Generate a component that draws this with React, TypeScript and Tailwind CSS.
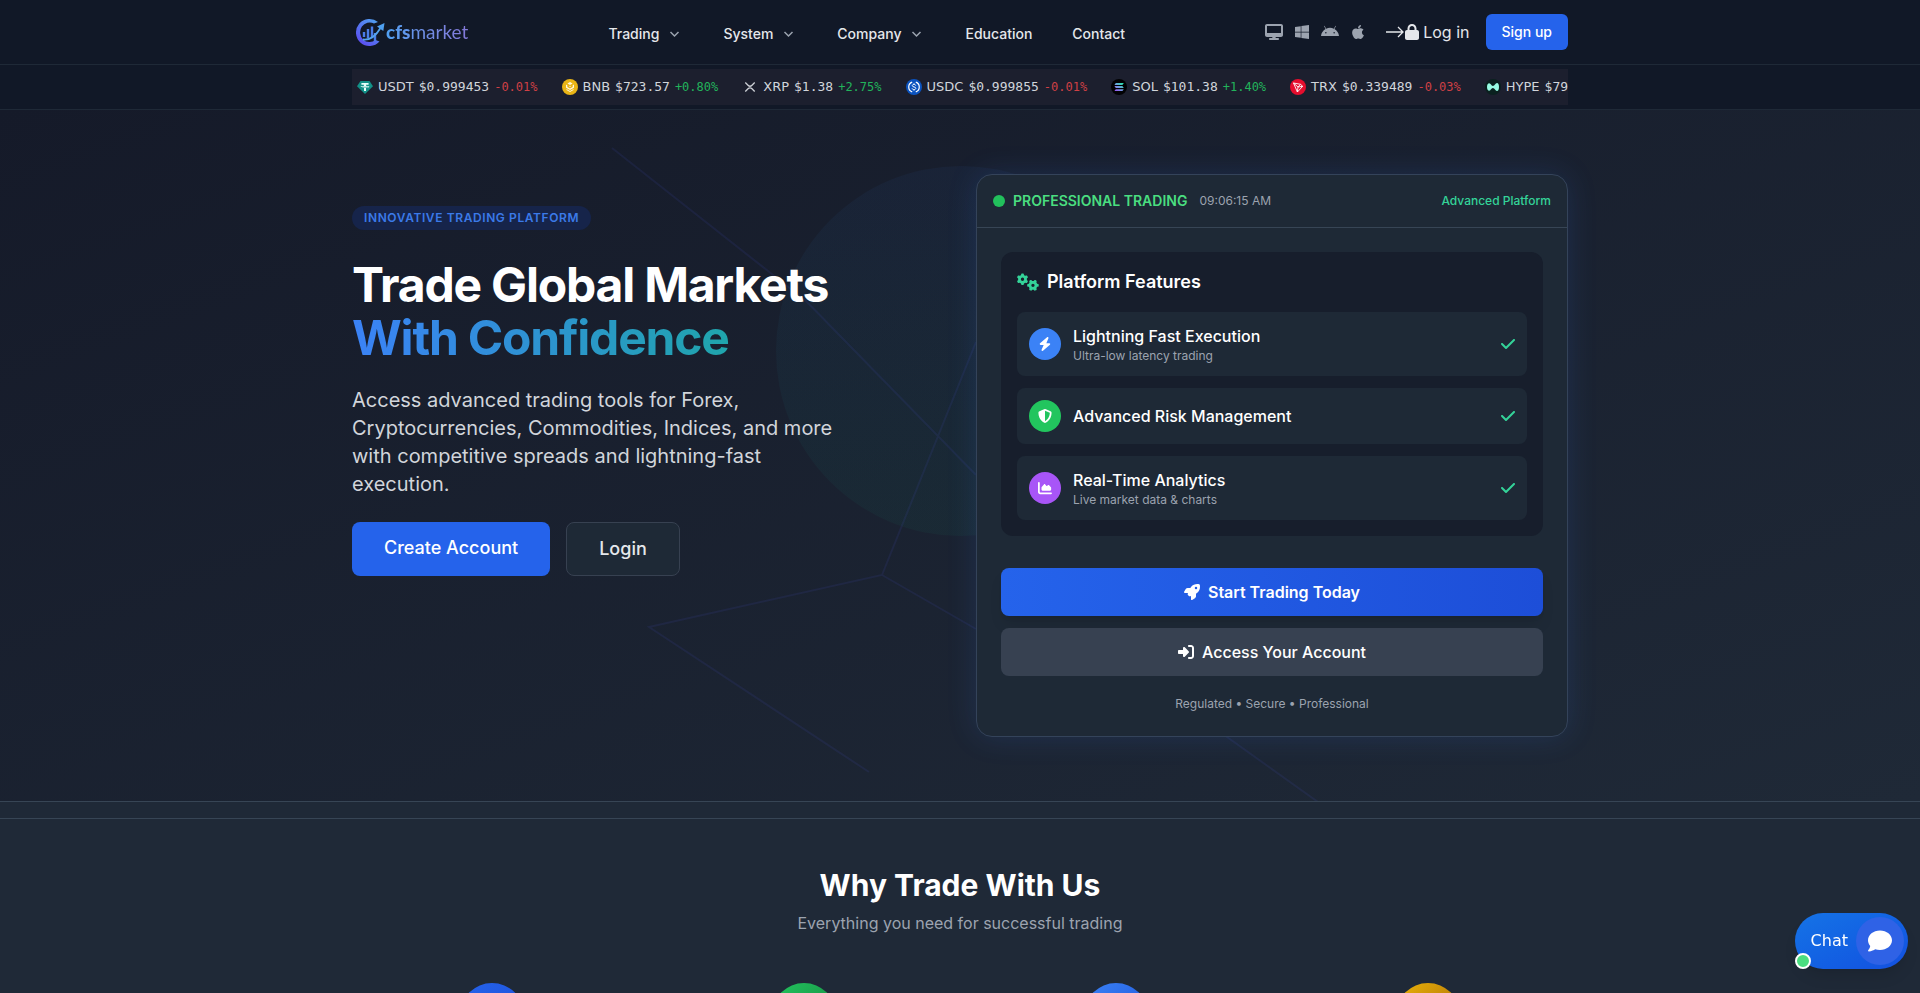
import {
  FaAndroid,
  FaApple,
  FaBolt,
  FaChartArea,
  FaCheck,
  FaComment,
  FaDesktop,
  FaGears,
  FaLock,
  FaRightToBracket,
  FaRocket,
  FaShieldHalved,
  FaWindows,
} from 'react-icons/fa6';

const nav = [
  { label: 'Trading', menu: true },
  { label: 'System', menu: true },
  { label: 'Company', menu: true },
  { label: 'Education', menu: false },
  { label: 'Contact', menu: false },
];

const coins = [
  { symbol: 'USDT', price: '$0.999453', change: '-0.01%' },
  { symbol: 'BNB', price: '$723.57', change: '+0.80%' },
  { symbol: 'XRP', price: '$1.38', change: '+2.75%' },
  { symbol: 'USDC', price: '$0.999855', change: '-0.01%' },
  { symbol: 'SOL', price: '$101.38', change: '+1.40%' },
  { symbol: 'TRX', price: '$0.339489', change: '-0.03%' },
  { symbol: 'HYPE', price: '$79', change: '' },
];

const features = [
  { title: 'Lightning Fast Execution', text: 'Ultra-low latency trading', icon: FaBolt, color: 'bg-[#3b82f6]' },
  { title: 'Advanced Risk Management', text: '', icon: FaShieldHalved, color: 'bg-[#22c55e]' },
  { title: 'Real-Time Analytics', text: 'Live market data & charts', icon: FaChartArea, color: 'bg-[#a855f7]' },
];

const reasons = [
  'from-[#2563eb] to-[#1d4ed8]',
  'from-[#22c55e] to-[#15803d]',
  'from-[#3b82f6] to-[#1d4ed8]',
  'from-[#eab308] to-[#a16207]',
];

function CoinIcon({ symbol }: { symbol: string }) {
  return (
    <svg viewBox="0 0 16 16" className="size-4 shrink-0" aria-hidden="true">
      {symbol === 'USDT' && (
        <>
          <path d="M3.5 2h9L16 7.2 8 15 0 7.2z" fill="#129188" />
          <path d="M4.4 4h7.2v1.8H9v1c2 .1 3.4.5 3.4 1s-1.4.9-3.4 1V12H7V8.800c-2-.1-3.400-.5-3.400-1s1.400-.9 3.400-1v-1H4.400z" fill="#e7fffb" />
          <path d="M4.600 7.800c1.800.6 5 .6 6.800 0" fill="none" stroke="#129188" strokeWidth=".6" />
        </>
      )}
      {symbol === 'BNB' && (
        <>
          <circle cx="8" cy="8" r="8" fill="#eab516" />
          <path d="m8 3 2.600 1.500L8 6 5.400 4.500zM4 5.500l1.300.8v1.600L8 9.500l2.700-1.600V6.300l1.300-.8v3.200L8 11 4 8.700zM8 6.700l1 .6-1 .6-1-.6zM4.500 10 8 12l3.500-2v1L8 13l-3.500-2z" fill="#fff8df" />
        </>
      )}
      {symbol === 'XRP' && (
        <path d="M3.300 3.500 6 6.200c1.100 1.100 2.900 1.100 4 0l2.700-2.700M3.300 12.500 6 9.800c1.100-1.100 2.900-1.100 4 0l2.700 2.700" fill="none" stroke="#cdd0d6" strokeWidth="1.300" />
      )}
      {symbol === 'USDC' && (
        <>
          <circle cx="8" cy="8" r="8" fill="#0b53bf" />
          <path d="M6.200 3.100a5.200 5.200 0 0 0 0 9.800M9.800 3.100a5.200 5.200 0 0 1 0 9.800" fill="none" stroke="#fff" strokeWidth="1.200" />
          <path d="M9.700 6.600C9.600 5.700 8.900 5.400 8 5.400s-1.700.4-1.700 1.200c0 1.900 3.500.8 3.500 2.700 0 .8-.8 1.300-1.800 1.300s-1.800-.4-1.900-1.300M8 4.400v1M8 10.600v1" fill="none" stroke="#fff" strokeWidth="1" />
        </>
      )}
      {symbol === 'SOL' && (
        <>
          <defs>
            <linearGradient id="sol" x1="1" y1="0" x2="0" y2="1">
              <stop stopColor="#19f0a0" />
              <stop offset=".5" stopColor="#6f9ee0" />
              <stop offset="1" stopColor="#a04cf5" />
            </linearGradient>
          </defs>
          <circle cx="8" cy="8" r="8" fill="#020204" />
          <path d="M4.800 4h8l-1.400 1.900h-8zM3.400 7.100h8L12.800 9h-8zM4.800 10.200h8l-1.400 1.900h-8z" fill="url(#sol)" />
        </>
      )}
      {symbol === 'TRX' && (
        <>
          <circle cx="8" cy="8" r="8" fill="#e50e2e" />
          <path d="m3.500 4 7 1.300 2.200 2L7.400 13zM3.500 4 8 8l4.700-.7M8 8l-.6 5M8 8l2.500-2.700" fill="none" stroke="#fff" strokeWidth=".9" strokeLinejoin="round" />
        </>
      )}
      {symbol === 'HYPE' && (
        <>
          <circle cx="8" cy="8" r="8" fill="#0a211f" />
          <path d="M2 8c0-2.200.9-3.700 2.200-3.700 1.700 0 1.900 2.600 3.700 2.600S10.300 4 12 4c1.200 0 2 1.600 2 4s-.8 4-2 4c-1.700 0-2.300-2.900-4.100-2.900s-2 2.600-3.700 2.600C2.900 11.700 2 10.200 2 8z" fill="#97fce4" />
        </>
      )}
    </svg>
  );
}

function Logo() {
  return (
    <a href="#" aria-label="cfsmarket" className="flex items-center">
      <svg viewBox="0 0 34 28" className="h-7 w-[34px]" fill="none" aria-hidden="true">
        <defs>
          <linearGradient id="ring" x1="1" y1="0" x2="0.300" y2="1">
            <stop stopColor="#4fa8f0" />
            <stop offset="1" stopColor="#5b4df0" />
          </linearGradient>
        </defs>
        <path d="M26 4A13.500 13.500 0 1 0 27.500 23.500l-4-1.500A9.500 9.800 0 1 1 22 5.600z" fill="url(#ring)" />
        <path d="M12 19v-5M16 20V11M20 19V8.500M23 23v-8" stroke="#4a7de8" strokeWidth="2.400" />
        <path d="M11 21.500c7 1 13-4 17.500-11.500" stroke="#55a4ee" strokeWidth="1.800" />
        <path d="m25 8.500 7.500-3.500-1.200 8z" fill="#4fa0f0" />
      </svg>
      <span className="bg-linear-to-r from-[#4fa0f2] to-[#8478d8] bg-clip-text font-['Lato',sans-serif] text-[19px] leading-6 text-transparent">
        <b className="font-black">cfs</b>market
      </span>
    </a>
  );
}

function Header() {
  return (
    <header className="border-b border-[#1f2937] bg-[#111827]">
      <div className="mx-auto flex h-16 max-w-7xl items-center justify-between px-8">
        <Logo />
        <nav className="flex gap-10 pt-1 text-sm font-medium text-[#e5e7eb]">
          {nav.map((item) => (
            <a key={item.label} href="#" className="flex items-center gap-2.5">
              {item.label}
              {item.menu && (
                <svg viewBox="0 0 14 14" className="size-3.5 text-[#9ca3af]" fill="none" stroke="currentColor" strokeWidth="1.500" aria-hidden="true">
                  <path d="m1.500 5 4 4 4-4" />
                </svg>
              )}
            </a>
          ))}
        </nav>
        <div className="flex items-center gap-4">
          <div className="flex items-center gap-3 pr-1 text-[#9ca3af]">
            <FaDesktop className="h-4 w-[18px]" />
            <FaWindows className="h-4 w-3.5" />
            <FaAndroid className="h-4 w-[18px]" />
            <FaApple className="h-4 w-3.5" />
          </div>
          <a href="#" className="flex items-center text-base text-[#e5e7eb]">
            <svg viewBox="0 0 20 16" className="h-4 w-5" fill="none" stroke="currentColor" strokeWidth="1.300" aria-hidden="true">
              <path d="M1 8h17M13 3l5 5-5 5" />
            </svg>
            <FaLock className="mr-1 h-4 w-3.5" />
            Log in
          </a>
          <button className="h-9 rounded-md bg-[#2563eb] px-4 text-sm font-medium text-white">Sign up</button>
        </div>
      </div>
    </header>
  );
}

function Ticker() {
  return (
    <div className="border-b border-[#1f2937] bg-[#111827] py-1">
      <div className="mx-auto max-w-7xl px-8">
        <div className="flex h-9 items-center gap-6 overflow-hidden bg-[#1c1f2e] pl-[5px] font-['DejaVu_Sans',sans-serif] text-[13px] whitespace-nowrap text-[#d1d5db]">
          {coins.map((coin) => (
            <div key={coin.symbol} className="flex shrink-0 items-center gap-[5px]">
              <CoinIcon symbol={coin.symbol} />
              <span>{coin.symbol}</span>
              <span className="font-['DejaVu_Sans_Mono',monospace]">{coin.price}</span>
              {coin.change && (
                <span className={`font-['DejaVu_Sans_Mono',monospace] text-xs ${coin.change.startsWith('-') ? 'text-[#cf4045]' : 'text-[#22b35b]'}`}>
                  {coin.change}
                </span>
              )}
            </div>
          ))}
        </div>
      </div>
    </div>
  );
}

function TradingCard() {
  return (
    <div className="rounded-2xl border border-[#34435a] bg-[#1e2936] shadow-[0_0_30px_rgba(59,130,246,0.15)]">
      <div className="flex items-center justify-between border-b border-[#374555] p-4">
        <div className="flex items-center">
          <span className="mr-2 size-3 rounded-full bg-[#22c05c]" />
          <span className="mr-3 text-sm font-semibold text-[#4ade80]">PROFESSIONAL TRADING</span>
          <span className="text-xs text-[#9ca3af]">09:06:15 AM</span>
        </div>
        <span className="text-xs font-medium text-[#34d399]">Advanced Platform</span>
      </div>
      <div className="p-6">
        <div className="rounded-xl bg-[#171e2c] p-4">
          <h3 className="mb-4 flex items-center gap-2 text-lg font-semibold text-white">
            <FaGears className="h-[18px] w-[22px] text-[#34d399]" />
            Platform Features
          </h3>
          <ul className="flex flex-col gap-3">
            {features.map((feature) => (
              <li key={feature.title} className="flex items-center gap-3 rounded-lg bg-[#1e2936] p-3">
                <span className={`flex size-8 items-center justify-center rounded-full text-sm text-white ${feature.color}`}>
                  <feature.icon />
                </span>
                <div className="flex-1">
                  <p className="font-medium text-white">{feature.title}</p>
                  {feature.text && <p className="text-xs text-[#9ca3af]">{feature.text}</p>}
                </div>
                <FaCheck className="h-4 w-3.5 text-[#34d399]" />
              </li>
            ))}
          </ul>
        </div>
        <div className="mt-8 flex flex-col gap-3">
          <button className="flex h-12 items-center justify-center gap-2 rounded-lg bg-linear-to-r from-[#2563eb] to-[#1d4ed8] font-semibold text-white shadow-lg">
            <FaRocket />
            Start Trading Today
          </button>
          <button className="flex h-12 items-center justify-center gap-2 rounded-lg bg-[#374151] font-medium text-white">
            <FaRightToBracket />
            Access Your Account
          </button>
        </div>
        <p className="mt-5 text-center text-xs text-[#9ca3af]">Regulated • Secure • Professional</p>
      </div>
    </div>
  );
}

function Hero() {
  return (
    <section className="relative isolate overflow-hidden bg-linear-to-br from-[#151a29] to-[#1f2937]">
      <div className="absolute top-14 left-1/2 -z-10 ml-[-184px] size-[370px] rounded-full bg-linear-to-b from-[#3b82f6] to-[#10b981] opacity-5" />
      <svg viewBox="0 0 1920 691" preserveAspectRatio="xMidYMid slice" className="absolute inset-0 -z-10 h-full w-full" fill="none" stroke="#4f5be0" strokeWidth="2" aria-hidden="true">
        <path d="M612 38 806 191l170 174M976 232 882 465 649 517l220 145M882 465l94 54M1220 622l105 75" opacity=".1" />
      </svg>
      <div className="mx-auto grid max-w-7xl grid-cols-2 gap-8 px-8 py-16">
        <div className="py-8">
          <span className="block w-fit rounded-full bg-[#16244a] px-3 py-1 text-xs font-semibold tracking-wider text-[#3b7ae8] uppercase">
            Innovative Trading Platform
          </span>
          <h1 className="mt-7 text-5xl leading-[53px] font-bold tracking-tight text-white">
            Trade Global Markets
            <span className="block bg-linear-to-r/srgb from-[#3b82f6] to-[#10b981] bg-clip-text text-transparent">With Confidence</span>
          </h1>
          <p className="mt-[22px] max-w-lg text-xl text-[#d1d5db]">
            Access advanced trading tools for Forex, Cryptocurrencies, Commodities, Indices, and more with competitive spreads and lightning-fast execution.
          </p>
          <div className="mt-6 flex gap-4 text-lg font-medium">
            <a href="#" className="rounded-lg bg-[#2563eb] px-8 py-3 text-white">Create Account</a>
            <a href="#" className="rounded-lg border border-[#374151] bg-[#1e2936] px-8 py-3 text-[#e5e7eb]">Login</a>
          </div>
        </div>
        <TradingCard />
      </div>
    </section>
  );
}

export default function App() {
  return (
    <div className="h-screen overflow-hidden bg-[#1f2937] font-['Inter',sans-serif]">
      <Header />
      <Ticker />
      <Hero />
      <div className="h-[18px] border-y border-[#374555]" />
      <section className="mx-auto max-w-7xl px-8 pt-12 text-center">
        <h2 className="text-3xl font-bold text-white">Why Trade With Us</h2>
        <p className="mt-2 text-[#9ca3af]">Everything you need for successful trading</p>
        <div className="mt-12 grid grid-cols-4 gap-8">
          {reasons.map((color) => (
            <div key={color} className={`mx-auto size-16 rounded-full bg-linear-to-br ${color}`} />
          ))}
        </div>
      </section>
      <button className="fixed right-3 bottom-6 flex h-14 items-center gap-2 rounded-full bg-linear-to-br from-[#1673e6] to-[#1450e0] pr-1 pl-4 font-['DejaVu_Sans',sans-serif] text-white shadow-lg">
        Chat
        <span className="flex size-12 items-center justify-center rounded-full bg-[#2f62e6]">
          <FaComment className="size-6" />
        </span>
        <span className="absolute bottom-0 left-0 size-4 rounded-full border-2 border-white bg-[#4ade80]" />
      </button>
    </div>
  );
}
